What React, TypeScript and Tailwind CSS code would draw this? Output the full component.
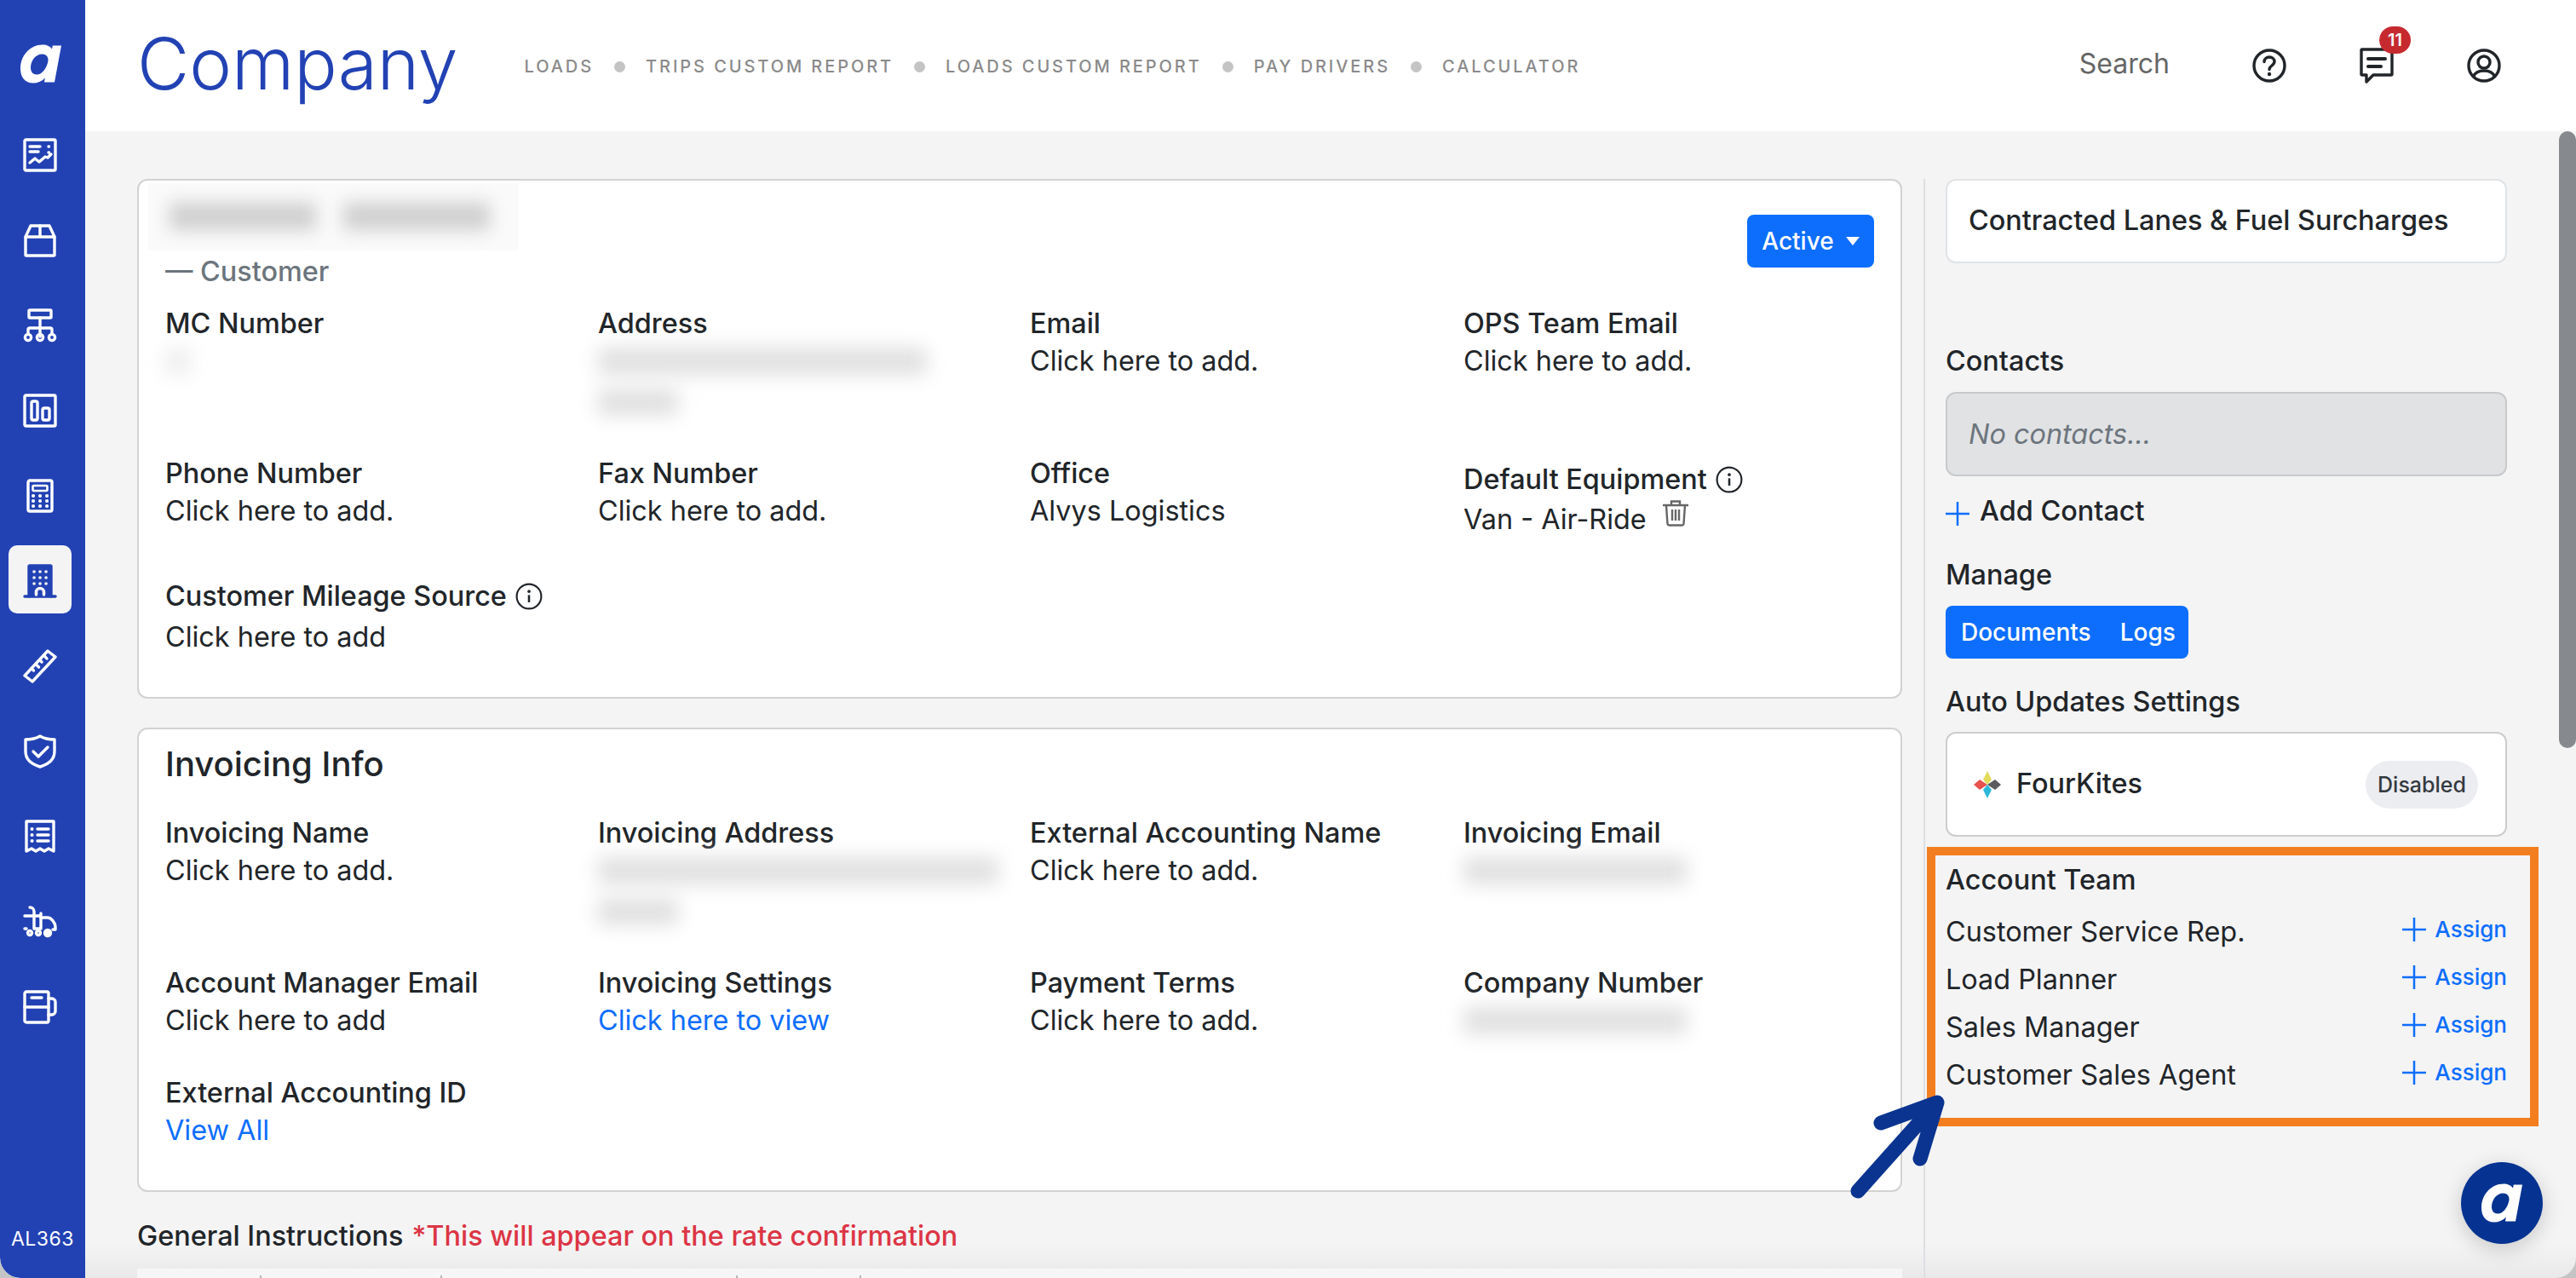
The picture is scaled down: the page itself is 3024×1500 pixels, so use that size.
import type { ReactNode } from "react";

const stroke = {
  fill: "none",
  stroke: "currentColor",
  strokeWidth: 3.4,
  strokeLinecap: "round" as const,
  strokeLinejoin: "round" as const,
};

function LogoA({ className }: { className: string }) {
  return (
    <svg viewBox="0 0 48 45" className={className} fill="currentColor">
      <path
        fillRule="evenodd"
        d="M48 1 L40 44 H28 L28.8 39 C25 43 20 45 15 45 C5 45 0 38 0 28 C0 13 11 0 26 0 C31 0 35 2 37 5 L37.8 1 Z M25.5 11 C17.5 11 12 19 12 27 C12 32 15 35 19 35 C26 35 31 27 32.5 19 C33 14 30 11 25.5 11 Z"
      />
    </svg>
  );
}

const navIcons: ReactNode[] = [
  <g key="report" {...stroke}>
    <rect x="2" y="2" width="36" height="36" rx="1.5" />
    <path d="M8 10h12M8 16h10M30 10h.5M30 17h.5M8 29l6-5 5 4 7-6 3 1 4-4" />
  </g>,
  <g key="box" {...stroke}>
    <path d="M3 16 9 3h22l6 13v21a1 1 0 0 1-1 1H4a1 1 0 0 1-1-1Z" />
    <path d="M3 16h34M20 3v13" />
  </g>,
  <g key="tree" {...stroke}>
    <rect x="7" y="2" width="26" height="9" rx="1" />
    <path d="M20 11v22M6 30v-5a2 2 0 0 1 2-2h24a2 2 0 0 1 2 2v5" />
    <circle cx="6" cy="34" r="3.6" />
    <circle cx="20" cy="34" r="3.6" />
    <circle cx="34" cy="34" r="3.6" />
  </g>,
  <g key="chart" {...stroke}>
    <rect x="2" y="2" width="36" height="36" rx="1.5" />
    <rect x="10" y="9" width="7" height="22" rx="2" />
    <rect x="23" y="17" width="8" height="14" rx="2" />
  </g>,
  <g key="calc" {...stroke}>
    <rect x="6" y="2" width="28" height="36" rx="2" />
    <rect x="11.5" y="8" width="17" height="6" rx="1" strokeWidth="2.6" />
    <path
      strokeWidth="4"
      d="M12 20h.1M20 20h.1M28 20h.1M12 26h.1M20 26h.1M28 26h.1M12 32h.1M20 32h.1M28 32h.1"
    />
  </g>,
];

const lowerIcons: ReactNode[] = [
  <g key="ruler" {...stroke}>
    <path d="M29 2 38 9 11 38 2 31Z" />
    <path d="M24.5 7 28 11M19.5 12.5 22 15M15 17.5 18.5 21M10 22.5 12.500 25" />
  </g>,
  <g key="shield" {...stroke}>
    <path d="M20 2c5 3 10 4 17 4v14c0 9-7 15-17 18C10 35 3 29 3 20V6c7 0 12-1 17-4Z" />
    <path d="M12 20l6 6 11-11" />
  </g>,
  <g key="receipt" {...stroke}>
    <path d="M4 2h32v35l-6-3-5 3-5-3-5 3-5-3-6 3Z" />
    <path d="M17 11h13M17 18h13M17 25h13" />
    <path strokeWidth="4" d="M10.500 11h.1M10.500 18h.1M10.500 25h.1" />
  </g>,
  <g key="truck" {...stroke}>
    <path d="M8 3c3 0 5 2 5 5v20M21 10v18M2 13h19M2 28h2M13 28h8" />
    <path d="M21 15h8c4 0 9 6 9 11v3h-3" />
    <circle cx="8" cy="33" r="2.5" />
    <circle cx="18" cy="33" r="2.5" />
    <circle cx="29" cy="33" r="3.5" fill="currentColor" />
  </g>,
  <g key="fuel" {...stroke}>
    <rect x="2" y="2" width="28" height="36" rx="2" />
    <path d="M2 20h28M10 9h12" />
    <path d="M30 10h4c2 0 4 2 4 4v11c0 2-2 4-4 4h-4" />
  </g>,
];

function NavIcon({ children, active }: { children: ReactNode; active?: boolean }) {
  return (
    <div
      className={`flex h-[80px] w-[74px] items-center justify-center rounded-[10px] pt-[4px] ${
        active ? "bg-[#f4f4f4] text-[#2242b4]" : "text-white"
      }`}
    >
      <svg viewBox="0 0 40 40" className="h-[40px] w-[40px]">
        {children}
      </svg>
    </div>
  );
}

function Sidebar() {
  return (
    <aside className="flex w-[100px] shrink-0 flex-col items-center rounded-bl-[24px] bg-[#2242b4] pt-[52px] text-white">
      <LogoA className="-ml-[4px] h-[46px] w-[48px]" />
      <div className="mt-[42px] flex flex-col items-center gap-[20px] pr-[6px]">
        {navIcons.map((icon, i) => (
          <NavIcon key={i}>{icon}</NavIcon>
        ))}
        <NavIcon active>
          <g {...stroke}>
            <path fill="currentColor" d="M7 38V3a1 1 0 0 1 1-1h24a1 1 0 0 1 1 1v35" />
            <path d="M2 38h36" />
            <path
              stroke="#f4f4f4"
              strokeWidth="3.6"
              d="M13 9h.1M20 9h.1M27 9h.1M13 16h.1M20 16h.1M27 16h.1M13 23h.1M20 23h.1M27 23h.1M15.500 36v-3a4.500 4.500 0 0 1 9 0v3"
            />
          </g>
        </NavIcon>
        {lowerIcons.map((icon, i) => (
          <NavIcon key={i}>{icon}</NavIcon>
        ))}
      </div>
      <div className="mt-auto mb-[32px] text-[23px] leading-[28px] tracking-[0.5px]">AL363</div>
    </aside>
  );
}

function Header() {
  const links = ["LOADS", "TRIPS CUSTOM REPORT", "LOADS CUSTOM REPORT", "PAY DRIVERS", "CALCULATOR"];
  return (
    <header className="flex h-[154px] shrink-0 items-center bg-white pl-[61px]">
      <h1 className="pb-[4px] text-[84px] leading-none font-light text-[#2242b4]">Company</h1>
      <nav className="ml-[78px] flex items-center gap-[24px] pt-[2px] text-[20px] font-medium tracking-[2.92px] text-[#8a8a8a]">
        {links.map((link, i) => (
          <div key={link} className="flex items-center gap-[24px]">
            {i > 0 && <span className="h-[13px] w-[13px] rounded-full bg-[#c4c4c4]" />}
            <span>{link}</span>
          </div>
        ))}
      </nav>
      <div className="ml-auto flex items-center text-[#212529]">
        <span className="pb-[5px] text-[32px] text-[#666]">Search</span>
        <svg viewBox="0 0 40 40" className="ml-[97px] h-[40px] w-[40px]">
          <circle cx="20" cy="20" r="18" {...stroke} />
          <path d="M14 15.500c0-3.500 2.700-5.500 6-5.500s6 2.200 6 5.300c0 4.700-6 4.700-6 9.200" {...stroke} />
          <circle cx="20" cy="30" r="2.200" fill="currentColor" />
        </svg>
        <div className="relative ml-[86px] h-[42px] w-[40px]">
          <svg viewBox="0 0 40 42" className="h-[42px] w-[40px]">
            <path d="M3 2h34a1 1 0 0 1 1 1v28a1 1 0 0 1-1 1H16l-8 8v-8H3a1 1 0 0 1-1-1V3a1 1 0 0 1 1-1Z" {...stroke} />
            <path d="M10 13h20M10 22h15" {...stroke} strokeWidth="4" />
          </svg>
          <span className="absolute top-[-25px] left-[23px] flex h-[32px] w-[37px] items-center justify-center rounded-full bg-[#c62a2f] text-[20px] font-semibold text-white">
            11
          </span>
        </div>
        <svg viewBox="0 0 40 40" className="mr-[88px] ml-[86px] h-[40px] w-[40px]">
          <circle cx="20" cy="20" r="18" {...stroke} />
          <circle cx="20" cy="16" r="7" {...stroke} />
          <path d="M7.500 33c2-5 7-7 12.500-7s10.500 2 12.500 7" {...stroke} />
        </svg>
      </div>
    </header>
  );
}

function InfoIcon() {
  return (
    <svg viewBox="0 0 30 30" className="h-[32px] w-[32px] shrink-0 text-[#212529]">
      <circle cx="15" cy="15" r="13.500" fill="none" stroke="currentColor" strokeWidth="2" />
      <path d="M15 13.500v8" fill="none" stroke="currentColor" strokeWidth="2.400" />
      <circle cx="15" cy="9.500" r="1.700" fill="currentColor" />
    </svg>
  );
}

function Field({ label, children, className = "" }: { label: ReactNode; children: ReactNode; className?: string }) {
  return (
    <div className={className}>
      <div className="flex h-[44px] items-center gap-[10px] font-medium">{label}</div>
      <div className="leading-[44px] text-[#212529]">{children}</div>
    </div>
  );
}

function Blurred({ lines, faint }: { lines: string[]; faint?: boolean }) {
  return (
    <div className="flex flex-col gap-[16px] pt-[6px] pb-[2px]">
      {lines.map((w, i) => (
        <div key={i} className={`h-[32px] ${w} ${faint ? "bg-[#eeeeee]" : "bg-[#e0e0e0]"} blur-[11px]`} />
      ))}
    </div>
  );
}

function Link({ children }: { children: ReactNode }) {
  return <span className="text-[#0d6efd]">{children}</span>;
}

function CustomerCard() {
  return (
    <section className="h-[610px] rounded-[12px] border-2 border-[#d2d2d2] bg-white px-[31px]">
      <div className="flex h-[146px] items-start justify-between">
        <div className="pt-[3px]">
          <div className="-ml-[20px] flex h-[79px] w-[435px] items-center gap-[32px] overflow-hidden bg-[#fafafa] pb-[2px] pl-[25px]">
            <div className="h-[32px] w-[172px] bg-[#cfcfcf] blur-[10px]" />
            <div className="h-[32px] w-[172px] bg-[#cfcfcf] blur-[10px]" />
          </div>
          <div className="mt-[3px] text-[32.4px] leading-[44px] font-medium text-[#6c757d]">— Customer</div>
        </div>
        <button className="mt-[40px] flex h-[62px] w-[149px] items-center justify-center gap-[14px] rounded-[8px] bg-[#0d6efd] text-[28px] font-medium text-white">
          Active
          <span className="border-x-[8px] border-t-[10px] border-x-transparent border-t-white" />
        </button>
      </div>
      <div className="grid grid-cols-[508px_507px_509px_1fr] gap-y-[44px]">
        <Field label="MC Number">
          <Blurred lines={["w-[30px]"]} faint />
        </Field>
        <Field label="Address">
          <Blurred lines={["w-[386px]", "w-[94px]"]} />
        </Field>
        <Field label="Email">Click here to add.</Field>
        <Field label="OPS Team Email">Click here to add.</Field>

        <Field label="Phone Number">Click here to add.</Field>
        <Field label="Fax Number">Click here to add.</Field>
        <Field label="Office">Alvys Logistics</Field>
        <Field
          label={
            <span className="flex items-center gap-[10px] pt-[14px]">
              Default Equipment <InfoIcon />
            </span>
          }
        >
          <div className="flex items-start gap-[18px] pt-[10px]">
            <span>Van - Air-Ride</span>
            <svg viewBox="0 0 32 32" className="mt-[-2px] h-[32px] w-[32px] text-[#666]" fill="none" stroke="currentColor" strokeWidth="2.400">
              <path d="M1 7h30M11 7V2.500h10V7M5 7l1.500 22a2 2 0 0 0 2 1.500h15a2 2 0 0 0 2-1.500L27 7M12 12v13M16 12v13M20 12v13" />
            </svg>
          </div>
        </Field>

        <Field
          className="pt-[2px]"
          label={
            <>
              Customer Mileage Source <InfoIcon />
            </>
          }
        >
          <div className="pt-[4px]">Click here to add</div>
        </Field>
      </div>
    </section>
  );
}

function InvoicingCard() {
  return (
    <section className="mt-[34px] h-[545px] rounded-[12px] border-2 border-[#d2d2d2] bg-white px-[31px]">
      <h2 className="flex h-[82px] items-center text-[40px] font-medium">Invoicing Info</h2>
      <div className="mt-[18px] grid grid-cols-[508px_507px_509px_1fr] gap-y-[44px]">
        <Field label="Invoicing Name">Click here to add.</Field>
        <Field label="Invoicing Address">
          <Blurred lines={["w-[470px]", "w-[94px]"]} />
        </Field>
        <Field label="External Accounting Name">Click here to add.</Field>
        <Field label="Invoicing Email">
          <Blurred lines={["w-[262px]"]} />
        </Field>

        <Field label="Account Manager Email">Click here to add</Field>
        <Field label="Invoicing Settings">
          <Link>Click here to view</Link>
        </Field>
        <Field label="Payment Terms">Click here to add.</Field>
        <Field label="Company Number">
          <Blurred lines={["w-[262px]"]} />
        </Field>

        <Field label="External Accounting ID" className="-mt-[3px]">
          <Link>View All</Link>
        </Field>
      </div>
    </section>
  );
}

function Plus({ size }: { size: string }) {
  return (
    <svg viewBox="0 0 28 28" className={`${size} shrink-0 text-[#0d6efd]`} fill="none" stroke="currentColor" strokeWidth="2.500">
      <path d="M14 0v28M0 14h28" />
    </svg>
  );
}

function RightColumn() {
  const team = ["Customer Service Rep.", "Load Planner", "Sales Manager", "Customer Sales Agent"];
  return (
    <aside className="ml-[24px] w-[659px] shrink-0 font-medium">
      <div className="flex h-[99px] items-center rounded-[12px] border-2 border-[#e0e3e6] bg-white pb-[2px] pl-[25px]">
        Contracted Lanes &amp; Fuel Surcharges
      </div>
      <div className="mt-[93px] leading-[44px]">Contacts</div>
      <div className="mt-[14px] flex h-[99px] items-center rounded-[12px] border-2 border-[#c7c9cb] bg-[#e1e2e4] pl-[25px] font-normal text-[#6c757d] italic">
        No contacts...
      </div>
      <div className="mt-[19px] flex h-[44px] items-center gap-[12px]">
        <span className="pt-[6px]">
          <Plus size="h-[28px] w-[28px]" />
        </span>
        Add Contact
      </div>
      <div className="mt-[31px] leading-[44px]">Manage</div>
      <div className="mt-[14px] flex h-[62px] w-[285px] items-center gap-[34px] rounded-[8px] bg-[#0d6efd] pl-[18px] text-[28px] text-white">
        <span>Documents</span>
        <span>Logs</span>
      </div>
      <div className="mt-[29px] leading-[44px]">Auto Updates Settings</div>
      <div className="mt-[13px] flex h-[123px] items-center rounded-[12px] border-2 border-[#cdcdcd] bg-white pr-[32px] pl-[31px]">
        <svg viewBox="0 0 32 32" className="h-[32px] w-[32px]">
          <path fill="#e3da5a" d="M16 0l5 10-5 6-5-6Z" />
          <path fill="#e8534f" d="M0 16l7-6 9 6-9 6Z" />
          <path fill="#5b5b5f" d="M32 16l-7-6-9 6 9 6Z" />
          <path fill="#2cb9dc" d="M16 32l-5-10 5-6 5 6Z" />
        </svg>
        <span className="ml-[18px] pb-[2px]">FourKites</span>
        <span className="ml-auto flex h-[56px] w-[132px] items-center justify-center rounded-full bg-[#ecedf1] text-[25px] text-[#343a40]">
          Disabled
        </span>
      </div>
      <div className="mt-[29px] leading-[44px]">Account Team</div>
      <div className="mt-[17px] flex flex-col gap-[12px] font-normal">
        {team.map((role) => (
          <div key={role} className="flex h-[44px] items-center justify-between">
            <span>{role}</span>
            <span className="flex items-center gap-[10px] pb-[6px] text-[26px] font-medium text-[#0d6efd]">
              <Plus size="h-[28px] w-[28px]" />
              Assign
            </span>
          </div>
        ))}
      </div>
    </aside>
  );
}

function Toolbar() {
  const ticks = ["ml-[144px]", "ml-[210px]", "ml-[345px]", "ml-[143px]"];
  return (
    <div className="relative mt-[16px] flex h-[40px] items-start bg-[#f6f6f6] pt-[8px]">
      {ticks.map((t) => (
        <div key={t} className={`${t} h-[20px] w-[2px] bg-[#b4b4b4]`} />
      ))}
    </div>
  );
}

export default function App() {
  return (
    <div className="h-[1500px] w-[3024px] bg-[#c4c4c4]">
      <div className="relative flex h-[1500px] w-[3024px] overflow-hidden rounded-b-[24px] bg-[#f4f4f4] text-[32.4px] leading-[44px] text-[#212529] [font-family:Inter,'Liberation_Sans',sans-serif]">
        <Sidebar />
        <main className="flex min-w-0 flex-1 flex-col">
          <Header />
          <div className="relative flex flex-1 pt-[56px] pl-[61px]">
            {/* window shadow fading in at the bottom edge */}
            <div className="absolute inset-x-0 bottom-0 h-[70px] bg-linear-to-b from-transparent to-black/8" />
            <div className="relative w-[2072px] shrink-0">
              <CustomerCard />
              <InvoicingCard />
              <div className="mt-[30px] flex h-[44px] items-center gap-[10px] font-medium">
                General Instructions
                <span className="text-[#dc3545]">*This will appear on the rate confirmation</span>
              </div>
              <Toolbar />
            </div>
            <div className="relative ml-[25px] w-[2px] shrink-0 bg-[#dcdee2]" />
            <RightColumn />
            {/* scrollbar thumb */}
            <div className="absolute top-0 right-0 h-[724px] w-[20px] rounded-full bg-[#868a8e]" />
          </div>
        </main>

        {/* annotation drawn over the screenshot */}
        <div className="pointer-events-none absolute top-[994px] left-[2262px] h-[328px] w-[718px] border-[10px] border-[#f37e20]" />
        <svg className="pointer-events-none absolute top-[1280px] left-[2170px] h-[130px] w-[120px] text-[#0a3490]" viewBox="0 0 120 130" fill="none" stroke="currentColor" strokeWidth="17" strokeLinecap="round" strokeLinejoin="round">
          <path d="M11 118 L104 14 M38 38 L104 14 L84 80" />
        </svg>
        <div className="absolute top-[1364px] left-[2889px] flex h-[96px] w-[96px] items-center justify-center rounded-full bg-[#063391] text-white shadow-[0_6px_24px_rgba(0,0,0,0.18)]">
          <LogoA className="h-[46px] w-[48px]" />
        </div>
      </div>
    </div>
  );
}
